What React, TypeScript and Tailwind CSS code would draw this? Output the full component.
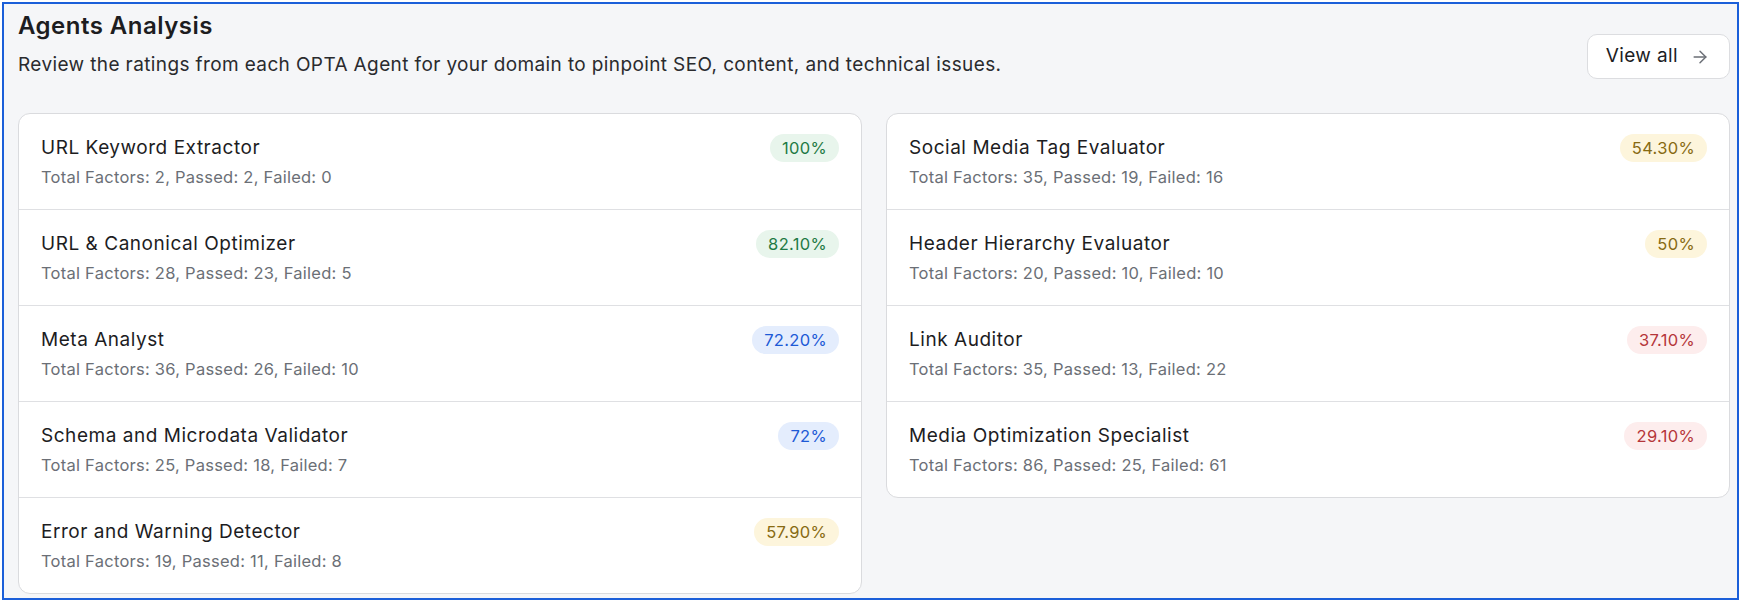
import { ArrowRight } from "lucide-react";

type Tone = "green" | "blue" | "yellow" | "red";

type Agent = {
  name: string;
  total: number;
  passed: number;
  failed: number;
  score: string;
  tone: Tone;
};

const leftAgents: Agent[] = [
  { name: "URL Keyword Extractor", total: 2, passed: 2, failed: 0, score: "100%", tone: "green" },
  { name: "URL & Canonical Optimizer", total: 28, passed: 23, failed: 5, score: "82.10%", tone: "green" },
  { name: "Meta Analyst", total: 36, passed: 26, failed: 10, score: "72.20%", tone: "blue" },
  { name: "Schema and Microdata Validator", total: 25, passed: 18, failed: 7, score: "72%", tone: "blue" },
  { name: "Error and Warning Detector", total: 19, passed: 11, failed: 8, score: "57.90%", tone: "yellow" },
];

const rightAgents: Agent[] = [
  { name: "Social Media Tag Evaluator", total: 35, passed: 19, failed: 16, score: "54.30%", tone: "yellow" },
  { name: "Header Hierarchy Evaluator", total: 20, passed: 10, failed: 10, score: "50%", tone: "yellow" },
  { name: "Link Auditor", total: 35, passed: 13, failed: 22, score: "37.10%", tone: "red" },
  { name: "Media Optimization Specialist", total: 86, passed: 25, failed: 61, score: "29.10%", tone: "red" },
];

const toneClasses: Record<Tone, string> = {
  green: "bg-[#e8f5ec] text-[#1f7a45]",
  blue: "bg-[#e4edfd] text-[#1d5ad6]",
  yellow: "bg-[#fdf5dc] text-[#876a12]",
  red: "bg-[#fdeded] text-[#b5363a]",
};

function AgentCard({ agents }: { agents: Agent[] }) {
  return (
    <div className="bg-white rounded-xl border border-[#dadbde] overflow-hidden self-start">
      {agents.map((agent, i) => (
        <div
          key={agent.name}
          className={`flex items-start justify-between px-[22px] py-5 ${i > 0 ? "border-t border-[#dfe0e3]" : ""}`}
        >
          <div className="flex flex-col gap-[3px]">
            <div className="text-[19px] tracking-[0.028em] leading-7 text-[#1d1d1f]">{agent.name}</div>
            <div className="text-[16.5px] tracking-[0.015em] leading-6 text-[#6b6f76]">
              Total Factors: {agent.total}, Passed: {agent.passed}, Failed: {agent.failed}
            </div>
          </div>
          <span className={`px-3 py-0.5 rounded-full text-[16.5px] tracking-[0.02em] leading-6 ${toneClasses[agent.tone]}`}>
            {agent.score}
          </span>
        </div>
      ))}
    </div>
  );
}

export default function App() {
  return (
    <div className="h-[602px] p-0.5 bg-white" style={{ fontFamily: "Inter, 'Noto Sans', sans-serif" }}>
      <div className="h-full border-2 border-[#1b5fd9] bg-[#f5f6f8] pl-[14px] pr-[7px] pt-[6px]">
        <div className="flex items-end justify-between">
          <div className="flex flex-col gap-[9px]">
            <h1 className="text-2xl tracking-[0.02em] leading-8 font-semibold text-[#1d1d1f]">Agents Analysis</h1>
            <p className="text-[19px] tracking-[0.02em] leading-7 text-[#2a2b2e]">
              Review the ratings from each OPTA Agent for your domain to pinpoint SEO, content, and technical issues.
            </p>
          </div>
          <button className="flex items-center gap-3 h-[45px] pl-[18px] pr-[19px] bg-white border border-[#dcdde0] rounded-[10px] text-[19px] tracking-[0.02em] text-[#1d1d1f]">
            View all
            <ArrowRight className="w-5 h-5 text-[#6b6f76]" strokeWidth={1.75} />
          </button>
        </div>
        <div className="grid grid-cols-2 gap-6 mt-[34px]">
          <AgentCard agents={leftAgents} />
          <AgentCard agents={rightAgents} />
        </div>
      </div>
    </div>
  );
}
